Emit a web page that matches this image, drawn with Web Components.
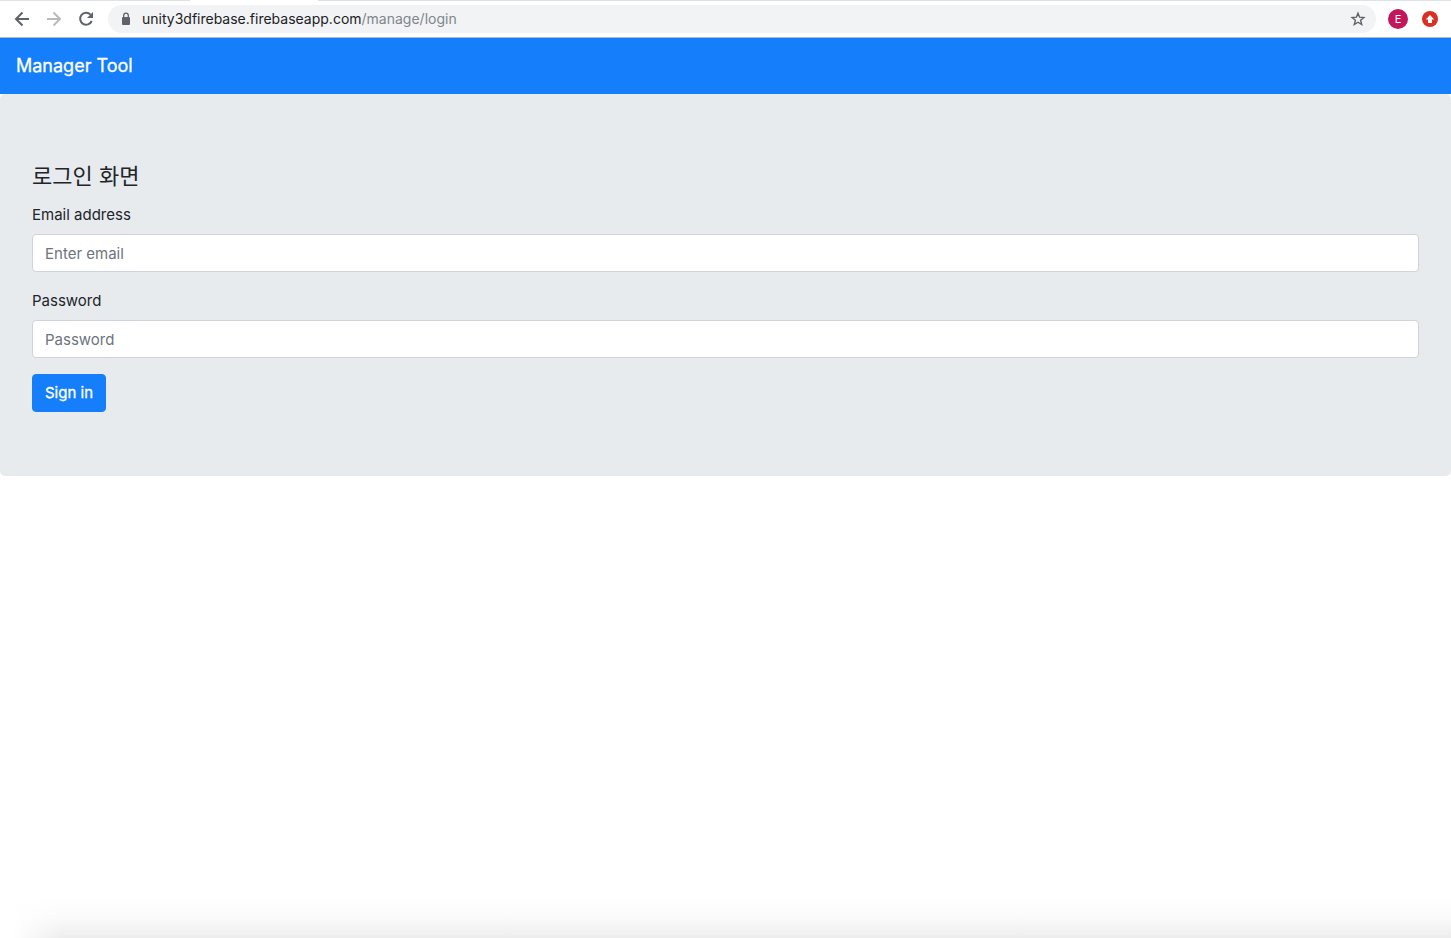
<!DOCTYPE html>
<html lang="ko">
<head>
<meta charset="utf-8">
<title>Manager Tool</title>
<style>
  html, body { margin: 0; }
  body {
    min-height: 100vh;
    display: flex;
    flex-direction: column;
    background: #fff;
    color: #212529;
    font: 15px/24px Inter, "Noto Sans CJK KR", sans-serif;
  }
</style>
</head>
<body>
<browser-toolbar host="unity3dfirebase.firebaseapp.com" path="/manage/login"></browser-toolbar>
<nav-bar>Manager Tool</nav-bar>
<login-panel>
  <span slot="title">로그인 화면</span>
  <form-field label="Email address" type="email" placeholder="Enter email"></form-field>
  <form-field label="Password" type="password" placeholder="Password"></form-field>
  <action-button>Sign in</action-button>
</login-panel>
<window-shade></window-shade>

<script>
const mount = (el, html) => {
  el.attachShadow({ mode: "open" }).innerHTML =
    "<style>*,*::before,*::after{box-sizing:border-box}</style>" + html;
  return el.shadowRoot;
};

customElements.define("browser-toolbar", class extends HTMLElement {
  constructor() {
    super();
    mount(this, `
<style>
  :host { display: block; background: #fff; border-bottom: 1px solid #b4b8bd; }
  .strip { display: flex; height: 1px; background: #dee1e6; }
  .strip i { width: 128px; margin-left: 190px; background: #fff; }
  .bar { display: flex; align-items: center; height: 36px; padding: 0 13px 0 14px; }
  button { display: block; width: 16px; height: 16px; padding: 0; border: 0; background: none; color: #5f6368; flex: none; }
  svg { display: block; width: 100%; height: 100%; }
  .nav { display: flex; gap: 16px; margin-right: 14px; }
  .nav button:disabled { color: #bababc; }
  .omni { flex: 1; display: flex; align-items: center; height: 28px; padding: 0 10px; border-radius: 14px; background: #f1f3f4; }
  .lock { width: 16px; height: 16px; margin-right: 8px; }
  .url { flex: 1; font-size: 14px; line-height: 20px; color: #202124; white-space: nowrap; }
  .url span { color: #80868b; }
  .avatar { width: 20px; height: 20px; margin: 0 14px 0 12px; border-radius: 50%; background: #c2185b; color: #fff; font: 11px/20px Inter, sans-serif; text-align: center; }
</style>
<div class="strip"><i></i></div>
<div class="bar">
  <div class="nav">
    <button aria-label="Back"><svg viewBox="0 0 16 16" fill="none" stroke="currentColor" stroke-width="2"><path d="M15 8H2.5M8.500 1.500L2 8l6.500 6.500"/></svg></button>
    <button aria-label="Forward" disabled><svg viewBox="0 0 16 16" fill="none" stroke="currentColor" stroke-width="2"><path d="M1 8h12.500M7.500 1.500L14 8l-6.500 6.500"/></svg></button>
    <button aria-label="Reload"><svg viewBox="0 0 16 16"><path d="M12.600 3.700A6 6 0 1 0 13.700 10" fill="none" stroke="currentColor" stroke-width="2"/><path d="M15 1v6H9z" fill="currentColor"/></svg></button>
  </div>
  <div class="omni">
    <svg class="lock" viewBox="0 0 16 16"><rect x="4" y="6" width="8" height="8" rx="1" fill="#5f6368"/><path d="M5.700 6.500V4.500a2.300 2.300 0 0 1 4.600 0v2" fill="none" stroke="#5f6368" stroke-width="1.300"/></svg>
    <div class="url"></div>
    <button aria-label="Bookmark"><svg viewBox="0 0 16 16" fill="none" stroke="currentColor" stroke-width="1.400"><path d="M8 2.200l1.600 4 4.300.3-3.300 2.800 1.100 4.200L8 11.200l-3.700 2.300 1.100-4.200L2.100 6.500l4.300-.3z"/></svg></button>
  </div>
  <button class="avatar">E</button>
  <button aria-label="Update"><svg viewBox="0 0 16 16"><circle cx="8" cy="8" r="8" fill="#d93025"/><path d="M8 4l4.200 4.600H10V12H6V8.600H3.800z" fill="#fff"/></svg></button>
</div>`);
  }
  connectedCallback() {
    const url = this.shadowRoot.querySelector(".url");
    const path = document.createElement("span");
    path.textContent = this.getAttribute("path");
    url.append(this.getAttribute("host"), path);
  }
});

customElements.define("nav-bar", class extends HTMLElement {
  constructor() {
    super();
    mount(this, `
<style>
  :host { display: block; padding: 12px 16px; background: #157efb; }
  nav { height: 32px; }
  a { display: block; width: max-content; color: #fff; font-size: 18px; line-height: 32px; text-decoration: none; -webkit-text-stroke: .3px #fff; }
</style>
<nav><a href="#"><slot></slot></a></nav>`);
  }
});

customElements.define("login-panel", class extends HTMLElement {
  constructor() {
    super();
    mount(this, `
<style>
  :host { display: block; padding: 64px 32px; border-radius: 5px; background: #e8ebee; }
  h4 { margin: 0 0 8px; font-size: 22px; line-height: 36px; font-weight: 400; }
</style>
<h4><slot name="title"></slot></h4>
<form><slot></slot></form>`);
  }
});

customElements.define("form-field", class extends HTMLElement {
  constructor() {
    super();
    mount(this, `
<style>
  :host { display: block; margin-bottom: 16px; }
  label { display: block; margin-bottom: 6px; line-height: 26px; }
  input { display: block; width: 100%; height: 38px; padding: 6px 12px; border: 1px solid #ced4da; border-radius: 4px; background: #fff; color: #495057; font: inherit; }
  input::placeholder { color: #6c757d; opacity: 1; }
</style>
<label for="control"></label><input id="control">`);
  }
  connectedCallback() {
    const input = this.shadowRoot.querySelector("input");
    this.shadowRoot.querySelector("label").textContent = this.getAttribute("label");
    input.type = this.getAttribute("type");
    input.placeholder = this.getAttribute("placeholder");
  }
});

customElements.define("action-button", class extends HTMLElement {
  constructor() {
    super();
    mount(this, `
<style>
  :host { display: block; }
  button { display: block; height: 38px; padding: 6px 12px; border: 1px solid #157efb; border-radius: 4px; background: #157efb; color: #fff; font: inherit; -webkit-text-stroke: .3px #fff; }
</style>
<button type="submit"><slot></slot></button>`);
  }
});

customElements.define("window-shade", class extends HTMLElement {
  constructor() {
    super();
    mount(this, `
<style>
  :host { display: block; height: 40px; margin-top: auto; background: linear-gradient(#fff, #fafafa 50%, #ededed); }
  div { width: 64px; height: 100%; background: linear-gradient(90deg, #fff 20%, #fff0); }
</style>
<div></div>`);
  }
});
</script>
</body>
</html>
